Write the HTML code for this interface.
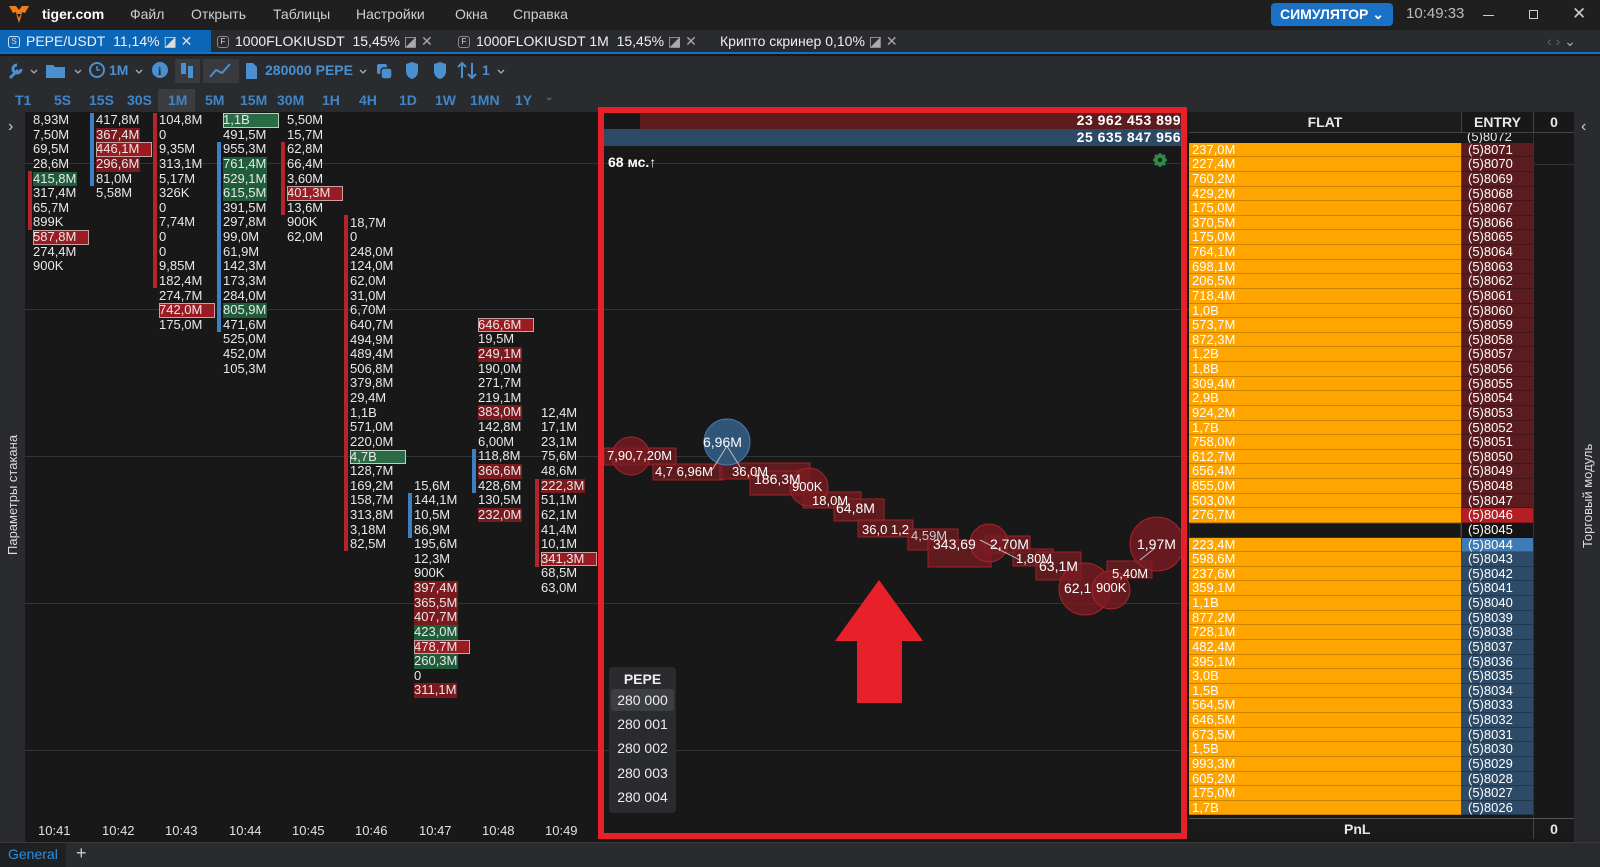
<!DOCTYPE html>
<html><head><meta charset="utf-8">
<style>
*{margin:0;padding:0;box-sizing:border-box}
body{width:1600px;height:867px;overflow:hidden;background:#181818;font-family:"Liberation Sans",sans-serif;color:#e8e8e8;position:relative}
.a{position:absolute}
.tb{top:0;left:0;width:1600px;height:30px;background:#1f1f1f}
.menu{top:6px;font-size:14px;color:#cfcfcf}
.tabs{top:30px;left:0;width:1600px;height:24px;background:#2a2b2e;border-bottom:2px solid #1670c4}
.tab{top:0;height:22px;font-size:14px;line-height:22px;color:#f0f0f0;white-space:nowrap}
.ic{display:inline-block;width:12px;height:12px;border:1px solid #888;border-radius:3px;font-size:8px;line-height:10px;text-align:center;vertical-align:middle;margin-right:6px;color:#ddd}
.tool{top:56px;left:0;width:1600px;height:56px;background:#2a2b2e}
.bl{color:#4a8fd0}
.tf{top:92px;font-size:14px;color:#3f86c8;font-weight:bold}
.col{position:absolute;font-size:13px;line-height:14.64px;white-space:nowrap}
.col div{height:14.64px;padding-left:2px}
.r{background:#7a1a1e;display:inline-block;padding-right:1px}
.g{background:#1f5c3a;display:inline-block;padding-right:1px}
.rb{background:#9a1c22;outline:1px solid #c9a3a3;outline-offset:-1px;display:inline-block;width:56px}
.gb{background:#2a6b45;outline:1px solid #b8d0c0;outline-offset:-1px;display:inline-block;width:56px}
.bar{position:absolute;width:4px}
.grid{position:absolute;left:25px;width:1165px;height:1px;background:#333}
.ob{position:absolute;font-size:13px;line-height:14.64px}
.ob div{height:14.64px;border-bottom:1px solid #c88400;padding-left:3px;color:#fff}
.en div{height:14.64px;padding-left:6px;color:#fff;border-bottom:1px solid rgba(0,0,0,.25)}
.tl{position:absolute;top:823px;font-size:13px;color:#e0e0e0}
.lbl{position:absolute;font-size:13px;color:#fff;white-space:nowrap}
.tt{position:absolute;top:62px;font-size:14px;font-weight:bold;color:#4a8fd0;white-space:nowrap}
</style></head><body>
<div class="a tb"></div>
<svg class="a" style="left:8px;top:5px" width="22" height="20" viewBox="0 0 22 20"><path d="M1 1 L8 1 L11 5 L14 1 L21 1 L17 8 L14 7 L13 12 L11 18 L9 12 L8 7 L5 8 Z" fill="#f07d1a"/><path d="M9 9 L11 13 L13 9" fill="#1f1f1f"/></svg>
<div class="a menu" style="left:42px;color:#fff;font-weight:bold">tiger.com</div>
<div class="a menu" style="left:130px">Файл</div>
<div class="a menu" style="left:191px">Открыть</div>
<div class="a menu" style="left:273px">Таблицы</div>
<div class="a menu" style="left:356px">Настройки</div>
<div class="a menu" style="left:455px">Окна</div>
<div class="a menu" style="left:513px">Справка</div>
<div class="a" style="left:1271px;top:3px;width:122px;height:23px;background:#1a72c6;border-radius:4px;font-size:14px;font-weight:bold;line-height:23px;color:#fff;padding-left:9px">СИМУЛЯТОР ⌄</div>
<div class="a menu" style="left:1406px;color:#bbb;font-size:15px;top:5px">10:49:33</div>
<div class="a" style="left:1483px;top:15px;width:11px;height:1px;background:#ccc"></div>
<div class="a" style="left:1529px;top:10px;width:9px;height:9px;border:1px solid #ccc"></div>
<div class="a menu" style="left:1572px;top:4px;font-size:17px;color:#ccc">✕</div>
<div class="a tabs">
<div class="a tab" style="left:0;width:211px;background:#0c66b8;padding-left:8px"><span class="ic" style="border-color:#cde">S</span>PEPE/USDT&nbsp; 11,14% <span style="color:#ddd">◪ ✕</span></div>
<div class="a tab" style="left:217px"><span class="ic">F</span>1000FLOKIUSDT&nbsp; 15,45% <span style="color:#aaa">◪ ✕</span></div>
<div class="a tab" style="left:458px"><span class="ic">F</span>1000FLOKIUSDT 1M&nbsp; 15,45% <span style="color:#aaa">◪ ✕</span></div>
<div class="a tab" style="left:720px">Крипто скринер 0,10% <span style="color:#aaa">◪ ✕</span></div>
<div class="a tab" style="left:1547px;color:#666">‹ › <span style="color:#aaa">⌄</span></div>
</div>
<div class="a tool"></div>
<div class="a" style="left:175px;top:59px;width:25px;height:24px;background:#383a3e"></div>
<div class="a" style="left:203px;top:59px;width:36px;height:24px;background:#383a3e"></div>
<svg class="a" style="left:0;top:56px" width="520" height="30" fill="#4a8fd0" stroke="#4a8fd0">
<path d="M10 22 L18 14 M17 9 a4 4 0 1 0 4 4" stroke-width="3" fill="none"/>
<path d="M31 14 l3 3 l3 -3 M75 14 l3 3 l3 -3 M136 14 l3 3 l3 -3 M360 14 l3 3 l3 -3 M498 14 l3 3 l3 -3" fill="none" stroke="#aaa" stroke-width="1.3"/>
<path d="M46 9 h7 l2 2 h10 v11 h-19 z" stroke="none"/>
<circle cx="97" cy="14" r="7" fill="none" stroke-width="2"/><path d="M97 10 v4 h3" fill="none" stroke-width="1.5"/>
<text x="109" y="19" stroke="none" font-size="14" font-weight="bold" font-family="Liberation Sans">1M</text>
<circle cx="160" cy="14" r="8" stroke="none"/><text x="158" y="19" fill="#2a2b2e" stroke="none" font-size="12" font-weight="bold" font-family="Liberation Serif">i</text>
<rect x="181" y="7" width="5" height="11" stroke="none"/><rect x="188" y="10" width="5" height="12" stroke="none"/>
<path d="M210 21 L216 14 L222 17 L230 8" fill="none" stroke-width="2"/>
<path d="M246 7 h7 l4 4 v12 h-11 z" stroke="none"/>
<text x="265" y="19" stroke="none" font-size="14" font-weight="bold" font-family="Liberation Sans">280000 PEPE</text>
<rect x="377" y="8" width="10" height="10" rx="2" stroke="none"/><rect x="381" y="12" width="11" height="11" rx="3" stroke="#2a2b2e" stroke-width="1.5"/>
<path d="M406 8 l6 -2 l6 2 v7 q0 6 -6 8 q-6 -2 -6 -8 z" stroke="none"/>
<path d="M434 8 l6 -2 l6 2 v7 q0 6 -6 8 q-6 -2 -6 -8 z" stroke="none"/>
<path d="M462 22 V7 M458 11 l4 -4 l4 4 M472 7 V22 M468 18 l4 4 l4 -4" fill="none" stroke-width="2"/>
<text x="482" y="19" stroke="none" font-size="14" font-weight="bold" font-family="Liberation Sans">1</text>
</svg>
<div class="a" style="left:158px;top:89px;width:37px;height:23px;background:#3a3c40"></div>
<div class="a tf" style="left:15px">T1</div><div class="a tf" style="left:54px">5S</div><div class="a tf" style="left:89px">15S</div><div class="a tf" style="left:127px">30S</div><div class="a tf" style="left:168px">1M</div><div class="a tf" style="left:205px">5M</div><div class="a tf" style="left:240px">15M</div><div class="a tf" style="left:277px">30M</div><div class="a tf" style="left:322px">1H</div><div class="a tf" style="left:359px">4H</div><div class="a tf" style="left:399px">1D</div><div class="a tf" style="left:435px">1W</div><div class="a tf" style="left:470px">1MN</div><div class="a tf" style="left:515px">1Y</div><div class="a tf" style="left:545px;color:#666;font-size:10px">⌄</div>
<div class="a" style="left:0;top:112px;width:25px;height:731px;background:#2a2b2e"></div>
<div class="a" style="left:8px;top:118px;color:#ccc;font-size:16px">›</div>
<div class="a" style="left:5px;top:555px;transform:rotate(-90deg);transform-origin:0 0;font-size:13px;color:#ddd;white-space:nowrap">Параметры стакана</div>
<div class="grid" style="top:163px"></div><div class="grid" style="top:309px"></div><div class="grid" style="top:456px"></div><div class="grid" style="top:603px"></div><div class="grid" style="top:750px"></div>
<div class="bar" style="left:28px;top:171px;height:59px;background:#b5242a"></div>
<div class="bar" style="left:90px;top:113px;height:73px;background:#3f7fc0"></div>
<div class="bar" style="left:153px;top:113px;height:175px;background:#b5242a"></div>
<div class="bar" style="left:217px;top:142px;height:190px;background:#3f7fc0"></div>
<div class="bar" style="left:281px;top:142px;height:73px;background:#b5242a"></div>
<div class="bar" style="left:344px;top:215px;height:336px;background:#b5242a"></div>
<div class="bar" style="left:408px;top:493px;height:45px;background:#3f7fc0"></div>
<div class="bar" style="left:472px;top:449px;height:44px;background:#3f7fc0"></div>
<div class="bar" style="left:535px;top:479px;height:88px;background:#b5242a"></div>
<div class="col" style="left:31px;top:113px"><div>8,93M</div><div>7,50M</div><div>69,5M</div><div>28,6M</div><div><span class="g">415,8M</span></div><div>317,4M</div><div>65,7M</div><div>899K</div><div><span class="rb">587,8M</span></div><div>274,4M</div><div>900K</div></div>
<div class="col" style="left:94px;top:113px"><div>417,8M</div><div><span class="r">367,4M</span></div><div><span class="rb">446,1M</span></div><div><span class="r">296,6M</span></div><div>81,0M</div><div>5,58M</div></div>
<div class="col" style="left:157px;top:113px"><div>104,8M</div><div>0</div><div>9,35M</div><div>313,1M</div><div>5,17M</div><div>326K</div><div>0</div><div>7,74M</div><div>0</div><div>0</div><div>9,85M</div><div>182,4M</div><div>274,7M</div><div><span class="rb">742,0M</span></div><div>175,0M</div></div>
<div class="col" style="left:221px;top:113px"><div><span class="gb">1,1B</span></div><div>491,5M</div><div>955,3M</div><div><span class="g">761,4M</span></div><div><span class="g">529,1M</span></div><div><span class="g">615,5M</span></div><div>391,5M</div><div>297,8M</div><div>99,0M</div><div>61,9M</div><div>142,3M</div><div>173,3M</div><div>284,0M</div><div><span class="g">805,9M</span></div><div>471,6M</div><div>525,0M</div><div>452,0M</div><div>105,3M</div></div>
<div class="col" style="left:285px;top:113px"><div>5,50M</div><div>15,7M</div><div>62,8M</div><div>66,4M</div><div>3,60M</div><div><span class="rb">401,3M</span></div><div>13,6M</div><div>900K</div><div>62,0M</div></div>
<div class="col" style="left:348px;top:215.5px"><div>18,7M</div><div>0</div><div>248,0M</div><div>124,0M</div><div>62,0M</div><div>31,0M</div><div>6,70M</div><div>640,7M</div><div>494,9M</div><div>489,4M</div><div>506,8M</div><div>379,8M</div><div>29,4M</div><div>1,1B</div><div>571,0M</div><div>220,0M</div><div><span class="gb">4,7B</span></div><div>128,7M</div><div>169,2M</div><div>158,7M</div><div>313,8M</div><div>3,18M</div><div>82,5M</div></div>
<div class="col" style="left:412px;top:478.7px"><div>15,6M</div><div>144,1M</div><div>10,5M</div><div>86,9M</div><div>195,6M</div><div>12,3M</div><div>900K</div><div><span class="r">397,4M</span></div><div><span class="r">365,5M</span></div><div><span class="r">407,7M</span></div><div><span class="g">423,0M</span></div><div><span class="rb">478,7M</span></div><div><span class="g">260,3M</span></div><div>0</div><div><span class="r">311,1M</span></div></div>
<div class="col" style="left:476px;top:317.7px"><div><span class="rb">646,6M</span></div><div>19,5M</div><div><span class="r">249,1M</span></div><div>190,0M</div><div>271,7M</div><div>219,1M</div><div><span class="r">383,0M</span></div><div>142,8M</div><div>6,00M</div><div>118,8M</div><div><span class="r">366,6M</span></div><div>428,6M</div><div>130,5M</div><div><span class="r">232,0M</span></div></div>
<div class="col" style="left:539px;top:405.5px"><div>12,4M</div><div>17,1M</div><div>23,1M</div><div>75,6M</div><div>48,6M</div><div><span class="r">222,3M</span></div><div>51,1M</div><div>62,1M</div><div>41,4M</div><div>10,1M</div><div><span class="rb">341,3M</span></div><div>68,5M</div><div>63,0M</div></div>
<div class="tl" style="left:38px">10:41</div><div class="tl" style="left:102px">10:42</div><div class="tl" style="left:165px">10:43</div><div class="tl" style="left:229px">10:44</div><div class="tl" style="left:292px">10:45</div><div class="tl" style="left:355px">10:46</div><div class="tl" style="left:419px">10:47</div><div class="tl" style="left:482px">10:48</div><div class="tl" style="left:545px">10:49</div>
<div class="a" style="left:604px;top:113px;width:578px;height:16px;background:#5e1c1e"></div>
<div class="a" style="left:604px;top:113px;width:36px;height:16px;background:#181818"></div>
<div class="a" style="left:604px;top:129px;width:578px;height:17px;background:#2c4a66"></div>
<div class="a" style="left:1000px;top:112px;width:181px;text-align:right;font-size:14px;font-weight:bold;color:#fff;letter-spacing:0.5px">23 962 453 899</div>
<div class="a" style="left:1000px;top:129px;width:181px;text-align:right;font-size:14px;font-weight:bold;color:#fff;letter-spacing:0.5px">25 635 847 956</div>
<div class="a" style="left:608px;top:154px;font-size:14px;font-weight:bold;color:#fff">68 мс.↑</div>
<svg class="a" style="left:1153px;top:153px" width="14" height="14" viewBox="0 0 14 14"><circle cx="7" cy="7" r="4.5" fill="none" stroke="#2e8b4a" stroke-width="3"/><path d="M7 0 V14 M0 7 H14 M2 2 L12 12 M12 2 L2 12" stroke="#2e8b4a" stroke-width="2"/><circle cx="7" cy="7" r="2" fill="#181818"/></svg>
<svg class="a" style="left:0;top:0" width="1600" height="867">
<g fill="#6a1c20" fill-opacity="0.85" stroke="#a02028" stroke-width="1">
<rect x="604" y="448" width="72" height="17"/><rect x="653" y="464" width="70" height="16"/><rect x="720" y="463" width="90" height="16"/><rect x="750" y="471" width="60" height="24"/><rect x="803" y="492" width="58" height="16"/><rect x="834" y="499" width="50" height="22"/><rect x="858" y="520" width="55" height="17"/><rect x="908" y="529" width="50" height="21"/><rect x="928" y="540" width="63" height="27"/><rect x="985" y="536" width="45" height="17"/><rect x="1013" y="549" width="40" height="17"/><rect x="1036" y="552" width="45" height="28"/><rect x="1107" y="561" width="45" height="17"/>
</g>
<g fill="#7a1c22" fill-opacity="0.8" stroke="#a8242c">
<circle cx="631" cy="456" r="19"/><circle cx="809" cy="487" r="19"/><circle cx="989" cy="543" r="19"/><circle cx="1085" cy="589" r="26"/><circle cx="1111" cy="590" r="19"/><circle cx="1157" cy="544" r="27"/>
</g>
<circle cx="727" cy="442" r="23" fill="#2f5579" stroke="#4a7cae"/>
<path d="M712 470 L727 446 L742 470 M980 540 L1020 560 M1140 560 L1155 548" stroke="#bbb" stroke-width="1" fill="none"/>
<path d="M879 580 L923 641 L902 641 L902 703 L857 703 L857 641 L835 641 Z" fill="#e8202a"/>
<rect x="601" y="110" width="583" height="726" fill="none" stroke="#e8202a" stroke-width="6"/>
</svg>
<div class="lbl" style="left:607px;top:448px">7,90,7,20M</div>
<div class="lbl" style="left:703px;top:434px;font-size:14px">6,96M</div>
<div class="lbl" style="left:655px;top:464px">4,7 6,96M</div>
<div class="lbl" style="left:732px;top:464px">36,0M</div>
<div class="lbl" style="left:754px;top:471px;font-size:14px">186,3M</div>
<div class="lbl" style="left:792px;top:479px">900K</div>
<div class="lbl" style="left:812px;top:493px">18,0M</div>
<div class="lbl" style="left:836px;top:500px;font-size:14px">64,8M</div>
<div class="lbl" style="left:862px;top:522px">36,0 1,2</div>
<div class="lbl" style="left:911px;top:528px;color:#ccc">4,59M</div>
<div class="lbl" style="left:933px;top:536px;font-size:14px">343,69</div>
<div class="lbl" style="left:990px;top:536px;font-size:14px">2,70M</div>
<div class="lbl" style="left:1016px;top:551px">1,80M</div>
<div class="lbl" style="left:1039px;top:558px;font-size:14px">63,1M</div>
<div class="lbl" style="left:1064px;top:580px;font-size:14px">62,1</div>
<div class="lbl" style="left:1096px;top:580px">900K</div>
<div class="lbl" style="left:1112px;top:566px">5,40M</div>
<div class="lbl" style="left:1137px;top:536px;font-size:14px">1,97M</div>
<div class="a" style="left:609px;top:667px;width:67px;height:146px;background:#2a2b2e;border-radius:4px;font-size:14px;text-align:center;color:#eee">
<div style="font-weight:bold;height:22px;line-height:24px">PEPE</div>
<div style="background:#3c3e42;margin:0 2px;border-radius:3px;height:22px;line-height:22px">280 000</div>
<div style="height:25px;line-height:26px">280 001</div><div style="height:25px;line-height:24px">280 002</div><div style="height:25px;line-height:24px">280 003</div><div style="height:25px;line-height:22px">280 004</div>
</div>
<div class="a" style="left:1189px;top:112px;width:385px;height:727px;background:#181818"></div>
<div class="a" style="left:1189px;top:112px;width:272px;height:21px;background:#1c1c1c;border-bottom:1px solid #444;text-align:center;font-weight:bold;font-size:14px;line-height:21px">FLAT</div>
<div class="a" style="left:1461px;top:112px;width:72px;height:21px;border-left:1px solid #444;border-bottom:1px solid #444;text-align:center;font-weight:bold;font-size:14px;line-height:21px">ENTRY</div>
<div class="a" style="left:1533px;top:112px;width:41px;height:21px;border-left:1px solid #444;border-bottom:1px solid #444;text-align:center;font-weight:bold;font-size:14px;line-height:21px">0</div>
<div class="a" style="left:1533px;top:164px;width:41px;height:1px;background:#333"></div>
<div class="a" style="left:1461px;top:133px;width:72px;height:10px;overflow:hidden;font-size:13px;line-height:8px;padding-left:6px;background:#181818">(5)8072</div>
<div class="ob" style="left:1189px;top:142.7px;width:272px;background:#ffa500">
<div>237,0M</div><div>227,4M</div><div>760,2M</div><div>429,2M</div><div>175,0M</div><div>370,5M</div><div>175,0M</div><div>764,1M</div><div>698,1M</div><div>206,5M</div><div>718,4M</div><div>1,0B</div><div>573,7M</div><div>872,3M</div><div>1,2B</div><div>1,8B</div><div>309,4M</div><div>2,9B</div><div>924,2M</div><div>1,7B</div><div>758,0M</div><div>612,7M</div><div>656,4M</div><div>855,0M</div><div>503,0M</div><div>276,7M</div><div style="background:#181818;border:1px solid #333"></div><div>223,4M</div><div>598,6M</div><div>237,6M</div><div>359,1M</div><div>1,1B</div><div>877,2M</div><div>728,1M</div><div>482,4M</div><div>395,1M</div><div>3,0B</div><div>1,5B</div><div>564,5M</div><div>646,5M</div><div>673,5M</div><div>1,5B</div><div>993,3M</div><div>605,2M</div><div>175,0M</div><div>1,7B</div></div>
<div class="ob en" style="left:1461px;top:142.7px;width:72px;border-left:1px solid #444">
<div style="background:#5a1c1e">(5)8071</div><div style="background:#5a1c1e">(5)8070</div><div style="background:#5a1c1e">(5)8069</div><div style="background:#5a1c1e">(5)8068</div><div style="background:#5a1c1e">(5)8067</div><div style="background:#5a1c1e">(5)8066</div><div style="background:#5a1c1e">(5)8065</div><div style="background:#5a1c1e">(5)8064</div><div style="background:#5a1c1e">(5)8063</div><div style="background:#5a1c1e">(5)8062</div><div style="background:#5a1c1e">(5)8061</div><div style="background:#5a1c1e">(5)8060</div><div style="background:#5a1c1e">(5)8059</div><div style="background:#5a1c1e">(5)8058</div><div style="background:#5a1c1e">(5)8057</div><div style="background:#5a1c1e">(5)8056</div><div style="background:#5a1c1e">(5)8055</div><div style="background:#5a1c1e">(5)8054</div><div style="background:#5a1c1e">(5)8053</div><div style="background:#5a1c1e">(5)8052</div><div style="background:#5a1c1e">(5)8051</div><div style="background:#5a1c1e">(5)8050</div><div style="background:#5a1c1e">(5)8049</div><div style="background:#5a1c1e">(5)8048</div><div style="background:#5a1c1e">(5)8047</div><div style="background:#b31f24">(5)8046</div><div style="background:#141414">(5)8045</div><div style="background:#3f7cb5">(5)8044</div><div style="background:#2d4a66">(5)8043</div><div style="background:#2d4a66">(5)8042</div><div style="background:#2d4a66">(5)8041</div><div style="background:#2d4a66">(5)8040</div><div style="background:#2d4a66">(5)8039</div><div style="background:#2d4a66">(5)8038</div><div style="background:#2d4a66">(5)8037</div><div style="background:#2d4a66">(5)8036</div><div style="background:#2d4a66">(5)8035</div><div style="background:#2d4a66">(5)8034</div><div style="background:#2d4a66">(5)8033</div><div style="background:#2d4a66">(5)8032</div><div style="background:#2d4a66">(5)8031</div><div style="background:#2d4a66">(5)8030</div><div style="background:#2d4a66">(5)8029</div><div style="background:#2d4a66">(5)8028</div><div style="background:#2d4a66">(5)8027</div><div style="background:#2d4a66">(5)8026</div></div>
<div class="a" style="left:1533px;top:133px;width:1px;height:706px;background:#333"></div>
<div class="a" style="left:1189px;top:818px;width:385px;height:21px;background:#1a1a1a;border-top:1px solid #555;font-weight:bold;font-size:14px;line-height:20px">
<span class="a" style="left:155px">PnL</span><span class="a" style="left:344px;width:41px;height:20px;border-left:1px solid #444;text-align:center">0</span></div>
<div class="a" style="left:1574px;top:112px;width:26px;height:731px;background:#2a2b2e"></div>
<div class="a" style="left:1581px;top:118px;color:#ccc;font-size:16px">‹</div>
<div class="a" style="left:1580px;top:548px;transform:rotate(-90deg);transform-origin:0 0;font-size:13px;color:#ddd;white-space:nowrap">Торговый модуль</div>
<div class="a" style="left:0;top:842px;width:1600px;height:25px;background:#2a2b2e;border-top:1px solid #3a3a3a"></div>
<div class="a" style="left:0;top:843px;width:66px;height:24px;background:#1f2022;color:#2a8ee0;font-size:14px;line-height:22px;padding-left:8px">General</div>
<div class="a" style="left:76px;top:843px;color:#ccc;font-size:18px">+</div>
</body></html>
